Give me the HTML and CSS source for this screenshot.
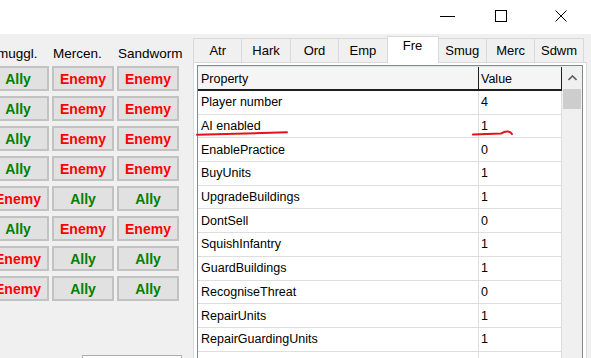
FILE: index.html
```html
<!DOCTYPE html>
<html lang="en">

<head>
    <meta charset="UTF-8">
    <title>AI settings</title>
    <link rel="stylesheet" href="styles.css">
</head>

<body>
    <div class="titlebar">
        <div class="winbtn min">
            <svg width="15" height="12" viewBox="0 0 15 12"><line x1="0" y1="6.5" x2="15" y2="6.5" stroke="#000" stroke-width="1" /></svg>
        </div>
        <div class="winbtn max">
            <svg width="12" height="12" viewBox="0 0 12 12"><rect x="0.5" y="0.5" width="11" height="11" fill="none" stroke="#000" stroke-width="1" /></svg>
        </div>
        <div class="winbtn close">
            <svg width="12" height="12" viewBox="0 0 12 12"><path d="M0.5 0.5 L11.5 11.5 M11.5 0.5 L0.5 11.5" stroke="#000" stroke-width="1" /></svg>
        </div>
    </div>

    <div class="main">
        <section class="teams">
            <div class="team-head">
                <span>Smuggl.</span>
                <span>Mercen.</span>
                <span>Sandworm</span>
            </div>
            <div class="team-rows">
                <div class="team-row"><button class="rel ally">Ally</button><button class="rel enemy">Enemy</button><button class="rel enemy">Enemy</button></div>
                <div class="team-row"><button class="rel ally">Ally</button><button class="rel enemy">Enemy</button><button class="rel enemy">Enemy</button></div>
                <div class="team-row"><button class="rel ally">Ally</button><button class="rel enemy">Enemy</button><button class="rel enemy">Enemy</button></div>
                <div class="team-row"><button class="rel ally">Ally</button><button class="rel enemy">Enemy</button><button class="rel enemy">Enemy</button></div>
                <div class="team-row"><button class="rel enemy">Enemy</button><button class="rel ally">Ally</button><button class="rel ally">Ally</button></div>
                <div class="team-row"><button class="rel ally">Ally</button><button class="rel enemy">Enemy</button><button class="rel enemy">Enemy</button></div>
                <div class="team-row"><button class="rel enemy">Enemy</button><button class="rel ally">Ally</button><button class="rel ally">Ally</button></div>
                <div class="team-row"><button class="rel enemy">Enemy</button><button class="rel ally">Ally</button><button class="rel ally">Ally</button></div>
            </div>
            <div class="bottom-btn"></div>
        </section>

        <section class="tabctl">
            <div class="tabs">
                <div class="tab">Atr</div>
                <div class="tab">Hark</div>
                <div class="tab">Ord</div>
                <div class="tab">Emp</div>
                <div class="tab active">Fre</div>
                <div class="tab">Smug</div>
                <div class="tab">Merc</div>
                <div class="tab">Sdwm</div>
            </div>
            <div class="page">
                <div class="grid">
                    <div class="grid-body">
                        <div class="grid-head">
                            <div class="cell prop">Property</div>
                            <div class="cell val">Value</div>
                        </div>
                        <div class="row"><div class="cell prop">Player number</div><div class="cell val">4</div></div>
                        <div class="row"><div class="cell prop">AI enabled</div><div class="cell val">1</div></div>
                        <div class="row"><div class="cell prop">EnablePractice</div><div class="cell val">0</div></div>
                        <div class="row"><div class="cell prop">BuyUnits</div><div class="cell val">1</div></div>
                        <div class="row"><div class="cell prop">UpgradeBuildings</div><div class="cell val">1</div></div>
                        <div class="row"><div class="cell prop">DontSell</div><div class="cell val">0</div></div>
                        <div class="row"><div class="cell prop">SquishInfantry</div><div class="cell val">1</div></div>
                        <div class="row"><div class="cell prop">GuardBuildings</div><div class="cell val">1</div></div>
                        <div class="row"><div class="cell prop">RecogniseThreat</div><div class="cell val">0</div></div>
                        <div class="row"><div class="cell prop">RepairUnits</div><div class="cell val">1</div></div>
                        <div class="row"><div class="cell prop">RepairGuardingUnits</div><div class="cell val">1</div></div>
                        <div class="row"><div class="cell prop">AIWaitingUnits</div><div class="cell val">0</div></div>
                    </div>
                    <div class="scroll">
                        <div class="scroll-up">
                            <svg width="9" height="6" viewBox="0 0 9 6"><path d="M0.5 5 L4.5 1 L8.5 5" fill="none" stroke="#606060" stroke-width="1.6" /></svg>
                        </div>
                        <div class="thumb"></div>
                    </div>
                </div>
            </div>
        </section>
    </div>

    <!-- red pen marks drawn over the screenshot -->
    <svg class="marks" width="591" height="358" viewBox="0 0 591 358">
        <path d="M197 134.8 Q 240 134 287 132.2" fill="none" stroke="#e8111b" stroke-width="2" stroke-linecap="round" />
        <path d="M473 134.6 L 501 133.6 Q 505 131 508 131.5 Q 511 132 512 134.2" fill="none" stroke="#e8111b" stroke-width="2" stroke-linecap="round" />
    </svg>
</body>

</html>
```

FILE: styles.css
```css
body {
    margin: 0;
    padding: 0;
    width: 591px;
    height: 358px;
    overflow: hidden;
    position: relative;
    background-color: #f0f0f0;
    font-family: "Liberation Sans", Arial, sans-serif;
    color: #000;
}

.titlebar {
    height: 34px;
    background-color: #fff;
    display: flex;
    justify-content: flex-end;
}

.winbtn {
    display: flex;
    justify-content: center;
    align-items: flex-start;
    padding-top: 10px;
    box-sizing: border-box;
}

.winbtn svg {
    display: block;
}

.min {
    width: 47px;
}

.max,
.close {
    width: 60px;
}

.main {
    display: flex;
    height: 324px;
}

/* left part: team relations */
.teams {
    width: 193px;
    overflow: hidden;
    flex-shrink: 0;
}

.team-head,
.team-row {
    display: grid;
    grid-template-columns: 62px 62px 62px;
    column-gap: 3px;
    margin-left: -13px;
}

.team-head {
    height: 32px;
    padding-top: 6px;
    box-sizing: border-box;
    align-items: center;
    font-size: 13.5px;
    white-space: nowrap;
}

.team-head span {
    padding-left: 1px;
}

.team-rows {
    display: flex;
    flex-direction: column;
    gap: 5px;
}

.rel {
    height: 25px;
    margin: 0;
    padding: 0;
    background-color: #e1e1e1;
    border: 2px solid #c2c2c2;
    font-family: "Liberation Sans", Arial, sans-serif;
    font-size: 14px;
    font-weight: bold;
    text-align: center;
    white-space: nowrap;
}

.ally {
    color: #008000;
}

.enemy {
    color: #ff0000;
}

.bottom-btn {
    margin-top: 54px;
    margin-left: 82px;
    width: 98px;
    height: 24px;
    background-color: #fdfdfd;
    border: 1px solid #adadad;
}

/* right part: tab control */
.tabctl {
    width: 394px;
    padding-top: 2px;
    display: flex;
    flex-direction: column;
}

.tabs {
    height: 26px;
    display: flex;
    align-items: flex-end;
}

.tab {
    width: 49.4px;
    flex-shrink: 0;
    height: 24px;
    box-sizing: border-box;
    border: 1px solid #d9d9d9;
    border-bottom: none;
    margin-right: -1px;
    padding-top: 4px;
    font-size: 13px;
    line-height: 16px;
    text-align: center;
    background-color: #f0f0f0;
}

.tab.active {
    position: relative;
    z-index: 1;
    height: 27px;
    width: 52px;
    margin-bottom: -1px;
    padding-top: 1px;
    background-color: #fff;
}

.page {
    flex: 1;
    border: 1px solid #d9d9d9;
    border-bottom: none;
    background-color: #fff;
    padding: 2px 3px 0 3px;
    overflow: hidden;
}

.grid {
    display: flex;
    border: 1px solid #828790;
    height: 400px;
    background-color: #fff;
}

.grid-body {
    width: 364px;
    font-size: 12.5px;
}

.grid-head {
    display: flex;
    height: 25px;
    box-sizing: border-box;
    background-color: #f5f5f5;
    border-bottom: 2px solid #1e1e1e;
    border-top: 1px solid #e4e4e4;
}

.grid-head .cell {
    border-right: 1px solid #1e1e1e;
    padding-top: 2px;
}

.row {
    display: flex;
    height: 23.7px;
    box-sizing: border-box;
    border-bottom: 1px solid #dedede;
}

.cell {
    display: flex;
    align-items: center;
    box-sizing: border-box;
    border-right: 1px solid #dedede;
    white-space: nowrap;
    overflow: hidden;
}

.prop {
    width: 281px;
    padding-left: 3px;
}

.val {
    width: 83px;
    padding-left: 2px;
}

.scroll {
    width: 20px;
    background-color: #f0f0f0;
    display: flex;
    flex-direction: column;
    align-items: center;
}

.scroll-up {
    height: 22px;
    display: flex;
    align-items: center;
    justify-content: center;
    padding-top: 2px;
    box-sizing: border-box;
}

.scroll-up svg {
    display: block;
}

.thumb {
    width: 18px;
    height: 20px;
    margin-top: 1px;
    background-color: #cdcdcd;
}

.marks {
    position: absolute;
    left: 0;
    top: 0;
    pointer-events: none;
}
```
